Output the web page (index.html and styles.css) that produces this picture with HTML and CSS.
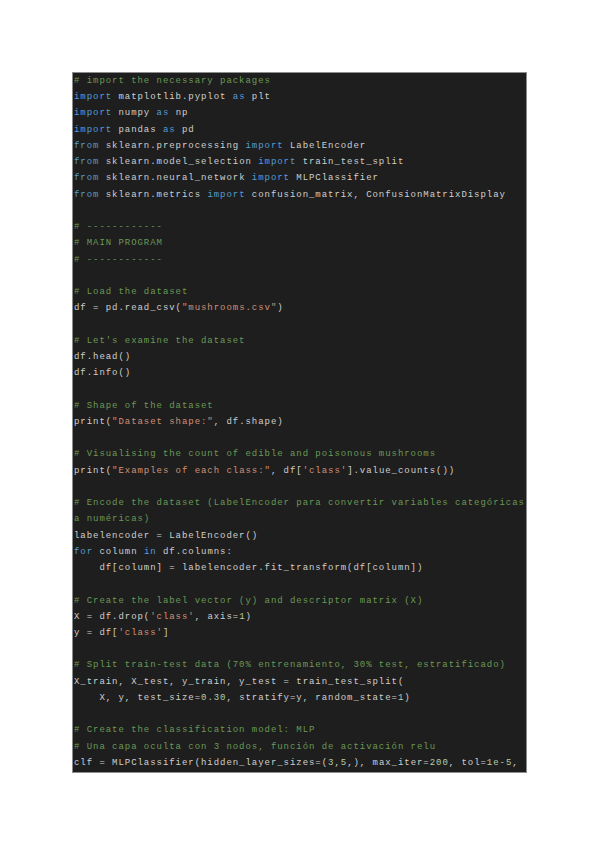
FILE: index.html
```html
<!DOCTYPE html>
<html lang="en">
<head>
<meta charset="utf-8">
<title>Code</title>
<link rel="stylesheet" href="styles.css">
</head>
<body>
<div class="page">
<div class="code">
<div class="ln"><span class="c"># import the necessary packages</span></div>
<div class="ln"><span class="k">import</span> matplotlib.pyplot <span class="k">as</span> plt</div>
<div class="ln"><span class="k">import</span> numpy <span class="k">as</span> np</div>
<div class="ln"><span class="k">import</span> pandas <span class="k">as</span> pd</div>
<div class="ln"><span class="k">from</span> sklearn.preprocessing <span class="k">import</span> LabelEncoder</div>
<div class="ln"><span class="k">from</span> sklearn.model_selection <span class="k">import</span> train_test_split</div>
<div class="ln"><span class="k">from</span> sklearn.neural_network <span class="k">import</span> MLPClassifier</div>
<div class="ln"><span class="k">from</span> sklearn.metrics <span class="k">import</span> confusion_matrix, ConfusionMatrixDisplay</div>
<div class="ln"></div>
<div class="ln"><span class="c"># ------------</span></div>
<div class="ln"><span class="c"># MAIN PROGRAM</span></div>
<div class="ln"><span class="c"># ------------</span></div>
<div class="ln"></div>
<div class="ln"><span class="c"># Load the dataset</span></div>
<div class="ln">df = pd.read_csv(<span class="s">"mushrooms.csv"</span>)</div>
<div class="ln"></div>
<div class="ln"><span class="c"># Let's examine the dataset</span></div>
<div class="ln">df.head()</div>
<div class="ln">df.info()</div>
<div class="ln"></div>
<div class="ln"><span class="c"># Shape of the dataset</span></div>
<div class="ln">print(<span class="s">"Dataset shape:"</span>, df.shape)</div>
<div class="ln"></div>
<div class="ln"><span class="c"># Visualising the count of edible and poisonous mushrooms</span></div>
<div class="ln">print(<span class="s">"Examples of each class:"</span>, df[<span class="s">'class'</span>].value_counts())</div>
<div class="ln"></div>
<div class="ln"><span class="c"># Encode the dataset (LabelEncoder para convertir variables categóricas</span></div>
<div class="ln"><span class="c">a numéricas)</span></div>
<div class="ln">labelencoder = LabelEncoder()</div>
<div class="ln"><span class="k">for</span> column <span class="k">in</span> df.columns:</div>
<div class="ln">    df[column] = labelencoder.fit_transform(df[column])</div>
<div class="ln"></div>
<div class="ln"><span class="c"># Create the label vector (y) and descriptor matrix (X)</span></div>
<div class="ln">X = df.drop(<span class="s">'class'</span>, axis=<span class="n">1</span>)</div>
<div class="ln">y = df[<span class="s">'class'</span>]</div>
<div class="ln"></div>
<div class="ln"><span class="c"># Split train-test data (70% entrenamiento, 30% test, estratificado)</span></div>
<div class="ln">X_train, X_test, y_train, y_test = train_test_split(</div>
<div class="ln">    X, y, test_size=<span class="n">0.30</span>, stratify=y, random_state=<span class="n">1</span>)</div>
<div class="ln"></div>
<div class="ln"><span class="c"># Create the classification model: MLP</span></div>
<div class="ln"><span class="c"># Una capa oculta con 3 nodos, función de activación relu</span></div>
<div class="ln">clf = MLPClassifier(hidden_layer_sizes=(<span class="n">3</span>,<span class="n">5</span>,), max_iter=<span class="n">200</span>, tol=<span class="n">1e-5</span>,</div>
<div class="end"></div>
</div>
<div class="after"></div>
</div>
</body>
</html>
```
FILE: styles.css
```css
html, body {
  margin: 0;
  padding: 0;
  background: #ffffff;
}

.page {
  padding: 72px 0 0 72px;
}

.code {
  box-sizing: border-box;
  width: 455px;
  padding: 0 0 0 1px;
  background: #1e1e1e;
  border: 1px solid #8c8c8c;
  color: #cfcfcf;
  font-family: "Liberation Mono", "DejaVu Sans Mono", monospace;
  font-size: 9px;
  letter-spacing: 0.95px;
  overflow: hidden;
}

.ln {
  height: 16.24px;
  line-height: 16.24px;
  white-space: pre;
}

.end {
  height: 1px;
}

.after {
  height: 6px;
}

.c { color: #6a9955; }
.k { color: #569cd6; }
.s { color: #ce9178; }
.n { color: #b5cea8; }
```
